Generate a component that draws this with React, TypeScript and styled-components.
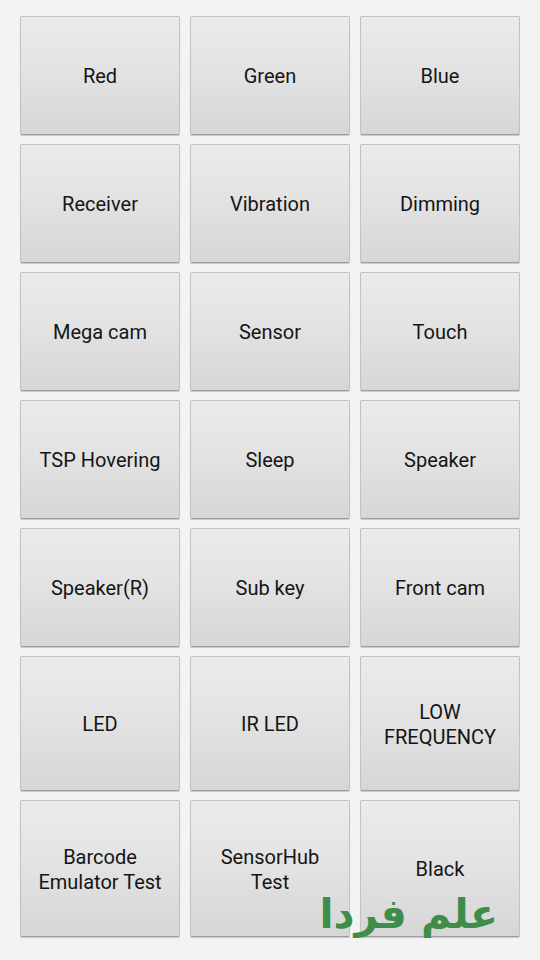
import styled, { createGlobalStyle } from "styled-components";

const GlobalStyle = createGlobalStyle`
  html, body {
    margin: 0;
    padding: 0;
    background: #f3f3f3;
  }
  body {
    font-family: Roboto, "Noto Sans", sans-serif;
  }
`;

const tests = [
  "Red",
  "Green",
  "Blue",
  "Receiver",
  "Vibration",
  "Dimming",
  "Mega cam",
  "Sensor",
  "Touch",
  "TSP Hovering",
  "Sleep",
  "Speaker",
  "Speaker(R)",
  "Sub key",
  "Front cam",
  "LED",
  "IR LED",
  "LOW\nFREQUENCY",
  "Barcode\nEmulator Test",
  "SensorHub\nTest",
  "Black",
];

export default function App() {
  return (
    <Screen>
      <GlobalStyle />
      <Grid>
        {tests.map((name) => (
          <TestButton key={name}>{name}</TestButton>
        ))}
      </Grid>
      <Watermark dir="rtl">علم فردا</Watermark>
    </Screen>
  );
}

const Screen = styled.div`
  position: relative;
  width: 540px;
  height: 960px;
  background: #f3f3f3;
  overflow: hidden;
`;

const Grid = styled.div`
  display: grid;
  grid-template-columns: repeat(3, 160px);
  grid-template-rows: repeat(5, 119px) 135px 137px;
  column-gap: 10px;
  row-gap: 9px;
  padding: 16px 20px 0;
`;

const TestButton = styled.div`
  display: flex;
  align-items: center;
  justify-content: center;
  box-sizing: border-box;
  padding-top: 2px;
  white-space: pre-line;
  text-align: center;
  font-size: 20px;
  line-height: 25px;
  color: #151515;
  background: linear-gradient(to bottom, #ebebeb 0%, #e2e2e2 50%, #d6d6d6 100%);
  border: 1px solid #c2c2c2;
  border-bottom-color: #9c9c9c;
  border-radius: 2px;
  box-shadow: 0 1px 1px rgba(0, 0, 0, 0.18);
`;

const Watermark = styled.div`
  position: absolute;
  right: 42px;
  top: 886px;
  white-space: nowrap;
  font-family: "DejaVu Sans", sans-serif;
  font-weight: bold;
  font-size: 41px;
  line-height: 56px;
  color: #3f8d4b;
`;
